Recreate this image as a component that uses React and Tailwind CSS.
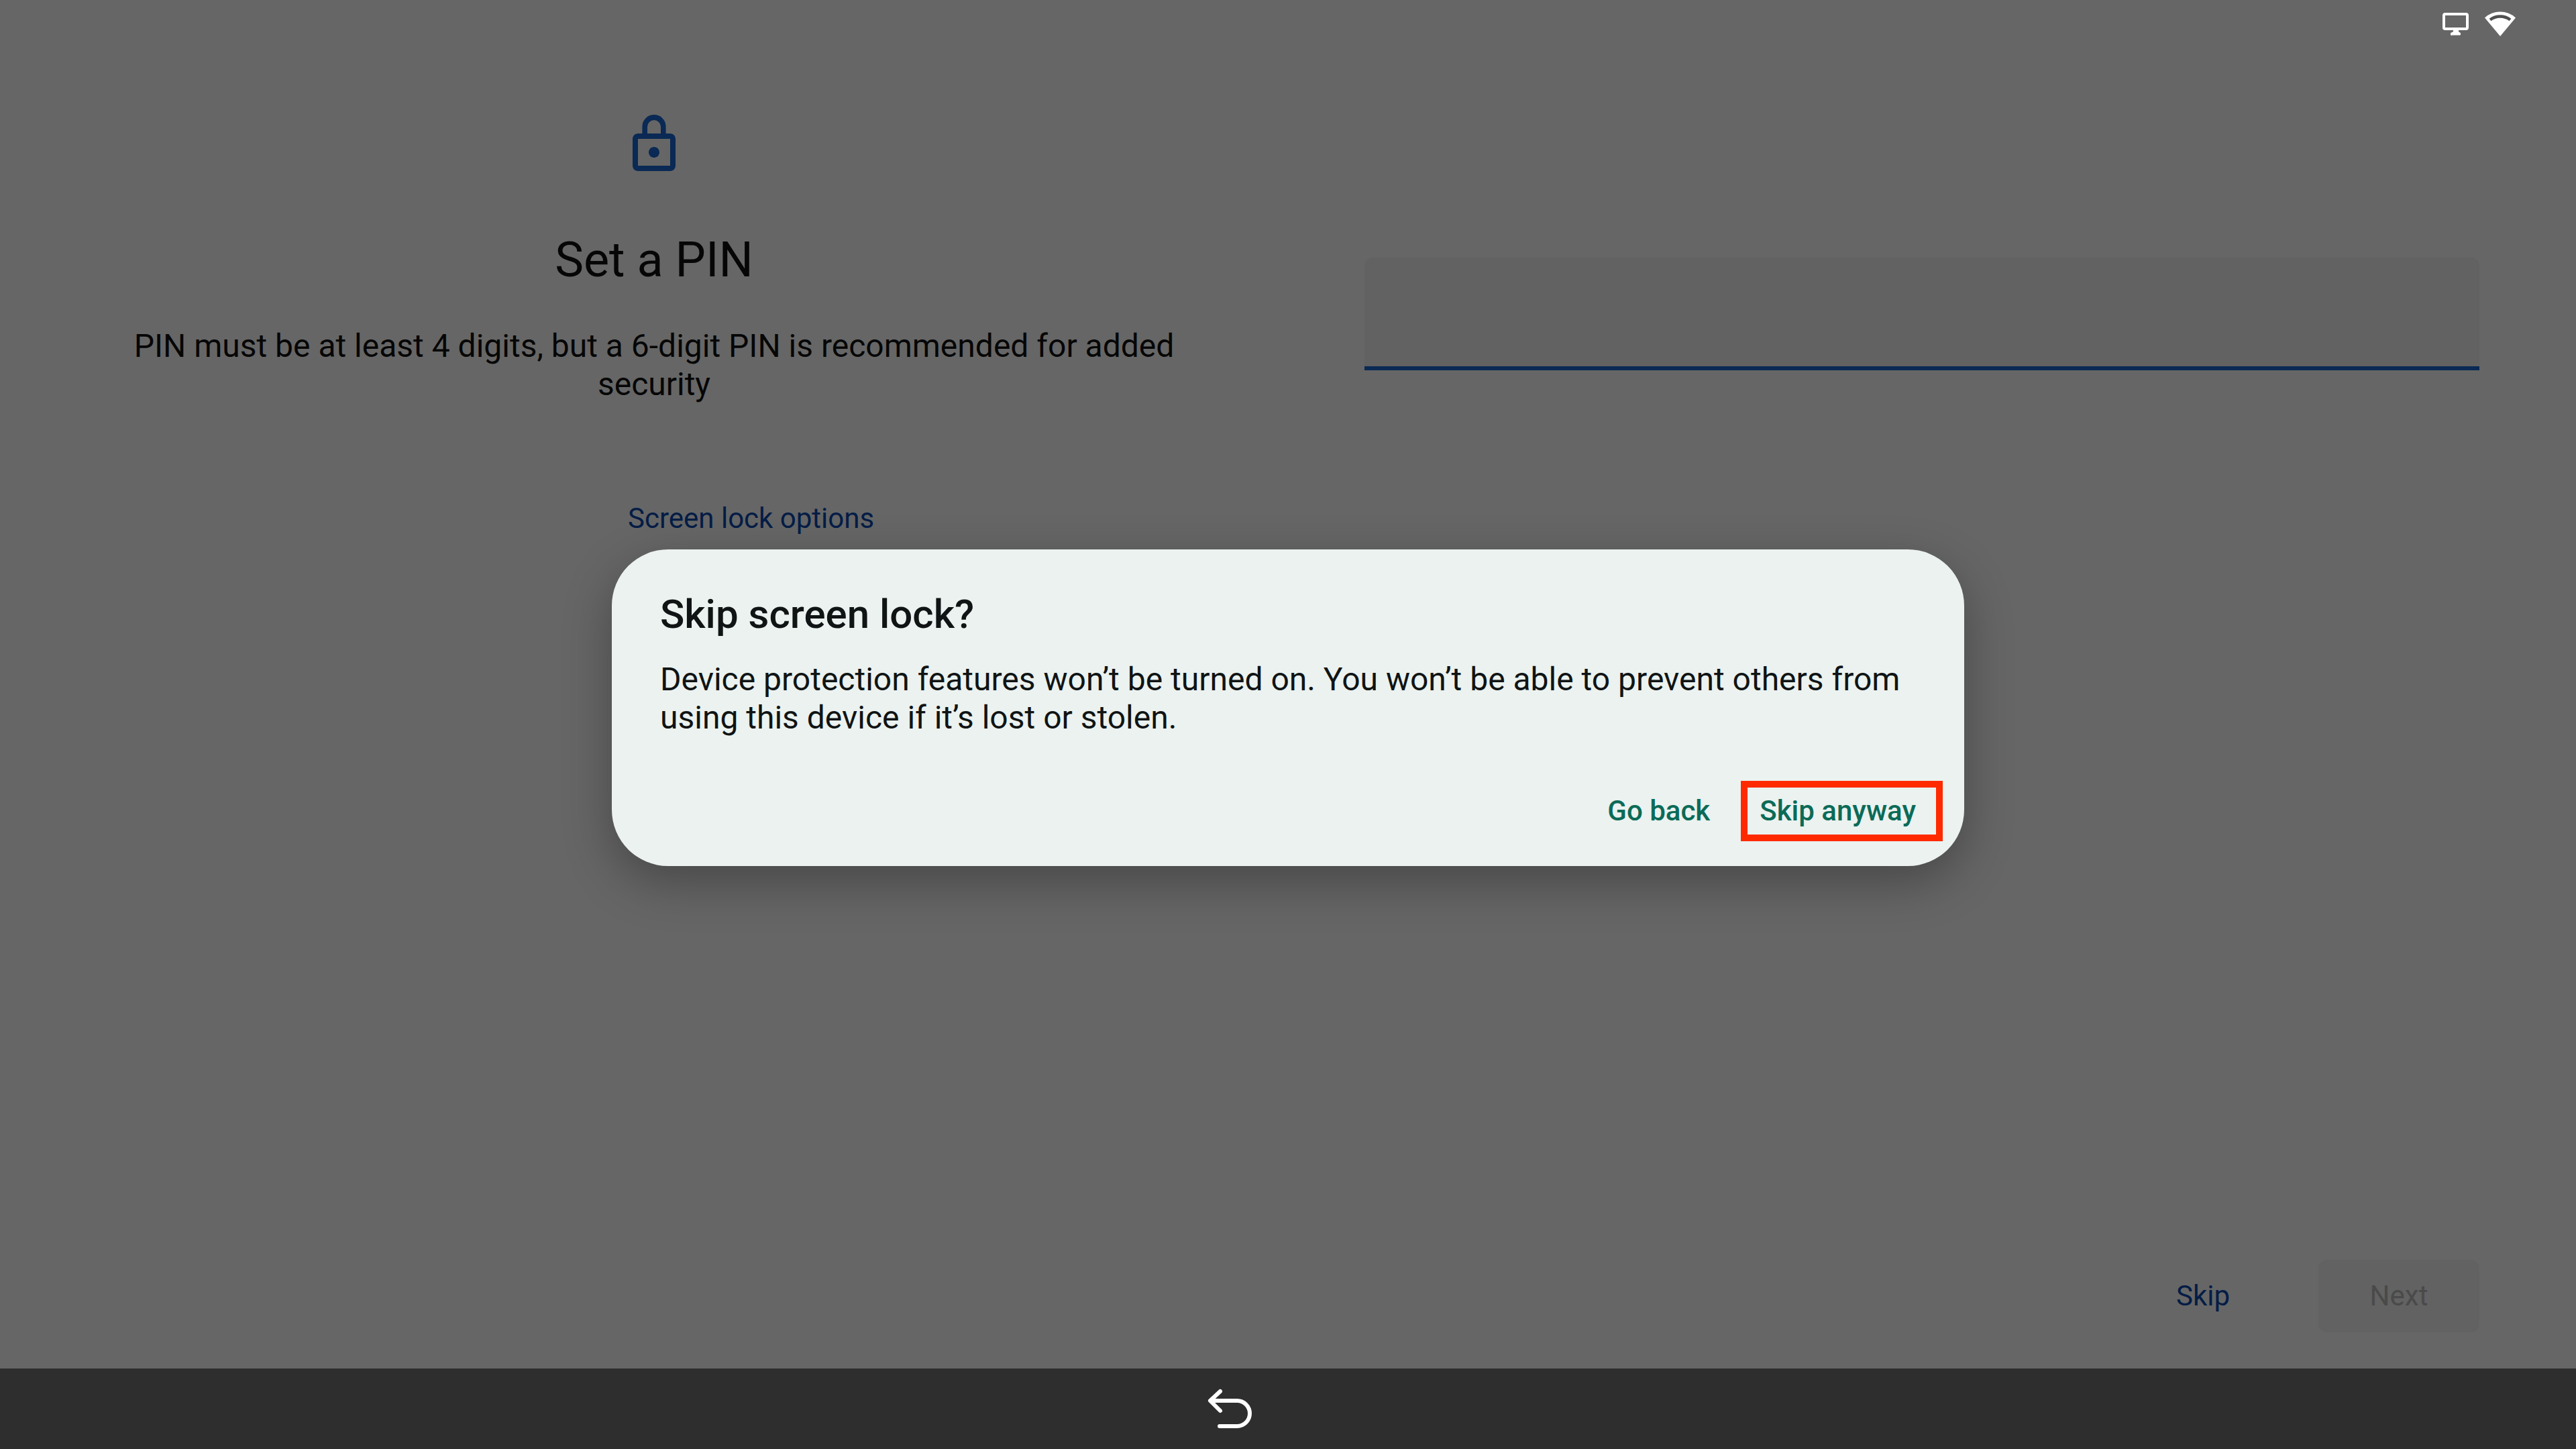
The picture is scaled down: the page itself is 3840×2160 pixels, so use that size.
import React, { useState } from "react";

const LockIcon = () => (
  <svg viewBox="0 0 24 24" className="size-24" fill="currentColor" aria-hidden="true">
    <path d="M18 8h-1.6V5.4a4.4 4.4 0 0 0-8.8 0V8H6c-1.1 0-2 .9-2 2v10c0 1.1.9 2 2 2h12c1.1 0 2-.9 2-2V10c0-1.1-.9-2-2-2zM9.5 5.5a2.5 2.5 0 0 1 5 0V8h-5V5.500zM18 20H6V10h12v10zm-6-3c1.100 0 2-.9 2-2s-.9-2-2-2-2 .9-2 2 .9 2 2 2z" />
  </svg>
);

const DisplayIcon = () => (
  <svg viewBox="0 0 40 40" className="size-10" fill="none" aria-hidden="true">
    <rect x="3" y="6" width="35" height="22" rx="2" stroke="currentColor" strokeWidth="4" />
    <path
      d="M17 29h8v3c0 1 3 1 3 3v1a1.500 1.500 0 0 1-1.500 1.500h-11A1.500 1.500 0 0 1 13 36v-1c0-2 4-2 4-3z"
      fill="currentColor"
    />
  </svg>
);

const WifiIcon = () => (
  <svg viewBox="0 0 46 40" className="h-10 w-[46px]" aria-hidden="true">
    <path d="M23 39 0 11.500a34 34 0 0 1 46 0z" fill="currentColor" />
    <path d="M8 14.500a25 25 0 0 1 30 0" fill="none" stroke="#505050" strokeWidth="4.500" />
  </svg>
);

const BackIcon = () => (
  <svg
    viewBox="0 0 72 72"
    className="size-18"
    fill="none"
    stroke="currentColor"
    strokeWidth="6"
    strokeLinecap="round"
    strokeLinejoin="round"
    aria-hidden="true"
  >
    <path d="M21 10 6 24l15 15M8 24h38a19 19 0 0 1 0 38H20" />
  </svg>
);

const App = () => {
  const [pin, setPin] = useState("");

  return (
    <div className="flex min-h-screen flex-col bg-white font-['Roboto',sans-serif]">
      <div className="relative flex flex-1 flex-col">
        {/* PIN setup */}
        <main className="grid flex-1 grid-cols-2 items-start gap-x-[228px] px-36 pt-[167px]">
          <section className="flex flex-col items-center text-center">
            <span className="text-[#1967d2]">
              <LockIcon />
            </span>
            <h1 className="mt-[83px] text-[72px] leading-[84px] text-[#111111]">Set a PIN</h1>
            <p id="pin-hint" className="mt-[57px] text-[48px] leading-[57px] text-[#111111]">
              PIN must be at least 4 digits, but a 6-digit PIN is recommended for added security
            </p>
            <button
              type="button"
              className="mt-[147px] ml-[792px] self-start text-[42px] leading-[50px] text-[#0b4ab0]"
            >
              Screen lock options
            </button>
          </section>

          <section className="pt-[217px]">
            <input
              type="password"
              inputMode="numeric"
              aria-label="PIN"
              aria-describedby="pin-hint"
              value={pin}
              onChange={(e) => setPin(e.target.value)}
              className="block h-42 w-full rounded-t-xl border-b-[6px] border-[#1967d2] bg-[#f5f5f5] px-12 text-[48px] outline-none"
            />
          </section>
        </main>

        <footer className="flex items-center justify-end gap-[84px] px-36 pb-[54px] text-[42px] leading-[50px]">
          <button type="button" className="h-27 px-12 text-[#0b4ab0]">
            Skip
          </button>
          <button type="button" disabled className="h-27 w-60 rounded-xl bg-[#f5f5f5] text-[#b8b8b8]">
            Next
          </button>
        </footer>

        {/* Dialog */}
        <div className="absolute inset-0 flex items-center justify-center bg-black/60 pt-[70px]">
          <div
            role="dialog"
            aria-modal="true"
            aria-labelledby="skip-title"
            className="w-[2016px] max-w-full rounded-[84px] bg-[#ebf2f0] pt-[62px] pb-[37px] shadow-[0_24px_72px_rgba(0,0,0,0.3)]"
          >
            <div className="px-18">
              <h2 id="skip-title" className="text-[60px] leading-[70px] font-medium text-[#101414]">
                Skip screen lock?
              </h2>
              <p className="mt-[33px] text-[48px] leading-[57px] text-[#101414]">
                Device protection features won’t be turned on. You won’t be able to prevent others from
                using this device if it’s lost or stolen.
              </p>
            </div>
            <div className="mt-[66px] flex items-center justify-end gap-[46px] pr-8 text-[42px] leading-[50px] font-medium text-[#0b6b57]">
              <button type="button">Go back</button>
              <button type="button" className="border-10 border-[#ff2a00] py-[10px] pr-[30px] pl-[18px]">
                Skip anyway
              </button>
            </div>
          </div>
        </div>

        {/* Status bar */}
        <div className="absolute top-0 right-0 flex gap-6 pt-[15px] pr-[90px] text-white">
          <DisplayIcon />
          <WifiIcon />
        </div>
      </div>

      {/* Navigation bar */}
      <nav className="flex h-30 items-center justify-center bg-[#2e2e2e] pr-[172px] text-white">
        <button type="button" aria-label="Back">
          <BackIcon />
        </button>
      </nav>
    </div>
  );
};

export default App;
